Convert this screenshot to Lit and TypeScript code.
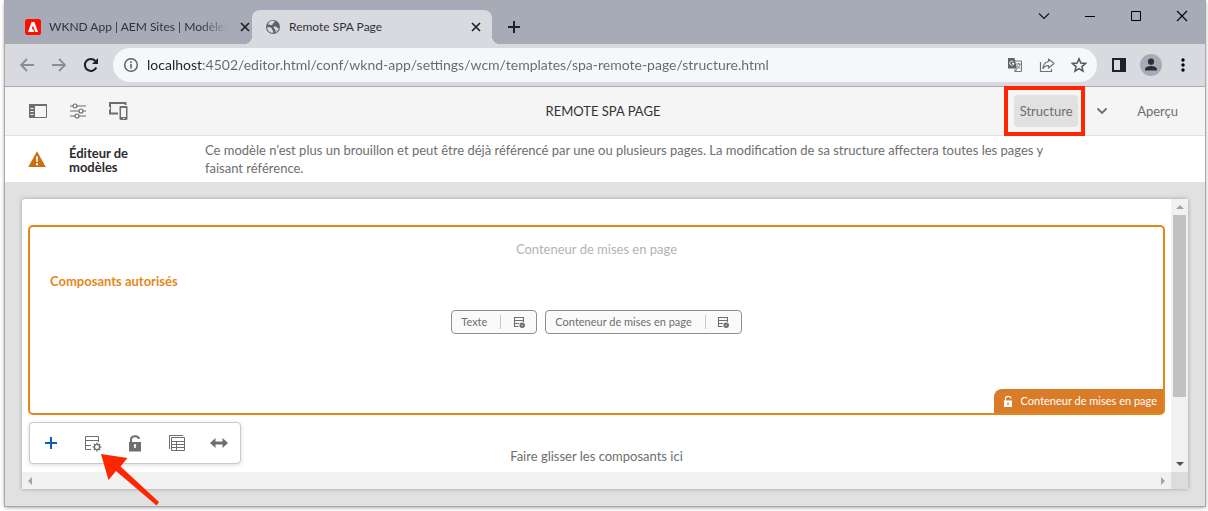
import { LitElement, html, css, svg, nothing } from "lit";
import { customElement, property } from "lit/decorators.js";

const GEAR_TEETH = [0, 45, 90, 135, 180, 225, 270, 315];

const icons: Record<string, unknown> = {
  adobe: svg`<rect width="16" height="16" rx="2.500" fill="#fa0f00"/><path d="M3 13 6.600 3h2.800L13 13h-2.600L8 6.600 6.600 10.200h1.700l1 2.800z" fill="#fff"/>`,
  globe: svg`<circle cx="8" cy="8" r="7" fill="#5f6368"/><path d="M3 5.600c1.500-.2 2.200.6 3.600.5 1.300-.1.700-1.600 2-2.100 1-.4 1.100-1 .6-2C6 1.200 3.600 2.800 3 5.600zM2.200 8.200c1.800 0 3.300-.4 4.300.8.8 1 .1 1.700 1.200 2.200.9.4.5 1.500 0 2.700-3-.1-5.500-2.300-5.500-5.700zM9 7.600c1.400-.3 2.600-.2 3 .8.3.9 1 .8 1.800.6-.3 2-1.800 4-3.600 4.500.4-1.600.8-2.300-.2-3.100-1-.7-1.900-2.500-1-2.800z" fill="#d9dae0"/>`,
  close: svg`<path d="m4 4 8 8M12 4l-8 8" stroke="#202124" stroke-width="1.700" fill="none"/>`,
  add: svg`<path d="M8 2v12M2 8h12" stroke="#202124" stroke-width="2"/>`,
  chevronThin: svg`<path d="m3 5.500 5 5 5-5" stroke="#111" fill="none" stroke-width="1.100"/>`,
  minimize: svg`<path d="M3 8.500h10" stroke="#000"/>`,
  maximize: svg`<path d="M3.500 3.500h9v9h-9z" stroke="#000" fill="none"/>`,
  closeWindow: svg`<path d="m3 3 10 10M13 3 3 13" stroke="#000" stroke-width="1.100"/>`,
  back: svg`<path d="M15 8H2M8 2 2 8l6 6" stroke="#8b8d94" stroke-width="1.800" fill="none"/>`,
  forward: svg`<path d="M1 8h13M8 2l6 6-6 6" stroke="#8b8d94" stroke-width="1.800" fill="none"/>`,
  reload: svg`<path d="M13.300 10.500A6 6 0 1 1 12.400 4" stroke="#202124" stroke-width="2" fill="none"/><path d="M15 1v6H9z" fill="#202124"/>`,
  info: svg`<circle cx="8" cy="8" r="6.300" stroke="#5f6368" stroke-width="1.500" fill="none"/><path d="M8 7v4.500M8 4.300V6" stroke="#5f6368" stroke-width="1.600"/>`,
  translate: svg`<path d="M7 4h7.500v10.500H7.500" fill="none" stroke="#777b80"/><path d="M1 1h6.500l2.500 10.500H1z" fill="#5f6368"/><path d="M7 6.200A2.100 2.100 0 1 1 6.400 4.700M5 6.300h2" fill="none" stroke="#fff"/><path d="M9 7h5M11.500 6v1m1.500 0c0 2-2 4-3 4.500M10.500 8.500c.5 1.500 2 2.500 3 3M8 12v2.500l2-2.500" stroke="#777b80" fill="none"/>`,
  share: svg`<path d="M1.500 5v9.500h11V12" fill="none" stroke="#6f7277" stroke-width="1.200"/><path d="M9.500 2 15 6.500 9.500 11V8.500C7 8.500 5.500 9.300 4 11.500c.3-4 2.500-6.500 5.500-7z" fill="none" stroke="#6f7277" stroke-width="1.200" stroke-linejoin="round"/>`,
  star: svg`<path d="m8 1.800 1.800 4.300 4.700.4-3.600 3.100 1.100 4.600-4-2.500-4 2.500 1.100-4.600L1.500 6.500l4.700-.4z" fill="none" stroke="#54575c" stroke-width="1.500"/>`,
  sidePanel: svg`<path d="M1 1h14v14H1zM3 3v10h6V3z" fill="#202124" fill-rule="evenodd"/>`,
  account: svg`<circle cx="12" cy="12" r="11" fill="#a7abb7"/><circle cx="12" cy="8.700" r="3.100" fill="#2b2e35"/><path d="M6 17.500v-1.300c0-2.200 3.500-3.200 6-3.200s6 1 6 3.200v1.300z" fill="#2b2e35"/>`,
  more: svg`<circle cx="8" cy="3" r="1.700"/><circle cx="8" cy="8" r="1.700"/><circle cx="8" cy="13" r="1.700"/>`,
  rail: svg`<path d="M.5 2.500h17v13H.5z" fill="none" stroke="#6e6e6e"/><path d="M0 2h18v2H0zM0 2h6v14H0z" fill="#6e6e6e"/><path d="M1.500 6.500h3M1.500 9.500h3M1.500 12.500h3" stroke="#f5f5f5"/>`,
  sliders: svg`<path d="M1 4h3M8 4h9M1 9h9M14 9h3M1 14h5M10 14h7" stroke="#6e6e6e" stroke-width="1.200"/><g fill="none" stroke="#6e6e6e" stroke-width="1.200"><circle cx="6" cy="4" r="2"/><circle cx="12" cy="9" r="2"/><circle cx="8" cy="14" r="2"/></g>`,
  devices: svg`<path d="M17.500 4V2H2v10.500h8" fill="none" stroke="#6e6e6e" stroke-width="2"/><path d="M1.500 6v2.500" stroke="#f5f5f5"/><rect x="11.500" y="5" width="8" height="14" rx="1.200" fill="#6e6e6e"/><path d="M13 7h5v9h-5z" fill="#f5f5f5"/><path d="M15 17.500h1.500" stroke="#f5f5f5"/>`,
  chevron: svg`<path d="m4 6 4 4 4-4" fill="none" stroke="#707070" stroke-width="1.900" stroke-linecap="round"/>`,
  alert: svg`<path d="M9 1.200 17.800 17H.2z" fill="#cb6f10"/><path d="M8 6.500h2L9.700 12H8.300zM8 13.300h2v2H8z" fill="#fff"/>`,
  policy: svg`<path d="M7 15.500H1.500v-13h13V8M1.500 6.500h13M1.500 11.500H7" fill="none" stroke="#6e6e6e"/><circle cx="13" cy="13" r="2.600" fill="none" stroke="#6e6e6e" stroke-width="1.300"/>${GEAR_TEETH.map(
    (a) => svg`<path d="M13 8.600v2" stroke="#6e6e6e" stroke-width="1.300" transform="rotate(${a} 13 13)"/>`
  )}`,
  policySmall: svg`<path d="M5.500 10.500H1.500v-9h9V6M1.500 4.500h9M1.500 7.500H6" fill="none" stroke="#6e6e6e" stroke-width="1.100"/><circle cx="9.200" cy="9.200" r="1.700" fill="none" stroke="#6e6e6e" stroke-width="2.100"/>`,
  plus: svg`<path d="M9 3v12M3 9h12" stroke="#0d5cb8" stroke-width="2"/>`,
  unlock: svg`<path d="M5 9V5.500C5 1.500 12.500.8 13 5" fill="none" stroke="#6e6e6e" stroke-width="2"/><path d="M3 8h12v9.500H3zM8.200 14h1.600v-1.700a1.300 1.300 0 1 0-1.600 0z" fill="#6e6e6e" fill-rule="evenodd"/>`,
  unlockWhite: svg`<path d="M2.500 6V3.500C2.500.8 8 .5 8 3.500" fill="none" stroke="#fff" stroke-width="1.200"/><path d="M1 5.500h8V12H1zM4.300 7.500V10h1.400V7.500z" fill="#fff" fill-rule="evenodd"/>`,
  table: svg`<path d="M1.500 15V1.500H15M3.500 3.500h13v13h-13zM3.500 7.500h13M3.500 10.500h13M3.500 13.500h13M8.500 7v9.500" fill="none" stroke="#6e6e6e"/>`,
  arrows: svg`<path d="m0 9 5.500-5v3.500h7V4L18 9l-5.500 5v-3.500h-7V14z" fill="#6e6e6e"/>`,
  up: svg`<path d="m4 10 4-4 4 4z" fill="#a3a3a3"/>`,
  down: svg`<path d="m4 6 4 4 4-4z" fill="#505050"/>`,
  left: svg`<path d="m10 4-4 4 4 4z" fill="#a3a3a3"/>`,
  right: svg`<path d="m6 4 4 4-4 4z" fill="#a3a3a3"/>`,
};

@customElement("ui-icon")
class UiIcon extends LitElement {
  @property() name = "";
  @property({ type: Number }) size = 16;

  static styles = css`
    :host { display: inline-flex; flex: none; }
    svg { display: block; }
  `;

  render() {
    return html`<svg width=${this.size} height=${this.size} viewBox="0 0 ${this.size} ${this.size}" aria-hidden="true">${icons[this.name] ?? nothing}</svg>`;
  }
}

const buttonReset = css`
  *, *::before { box-sizing: border-box; }
  button {
    display: inline-flex;
    align-items: center;
    justify-content: center;
    padding: 0;
    border: 0;
    background: none;
    font: inherit;
    color: inherit;
    cursor: pointer;
  }
`;

const iconButton = (name: string, label: string, size = 16, cls = "") =>
  html`<button class=${cls} aria-label=${label}><ui-icon name=${name} size=${size}></ui-icon></button>`;

@customElement("browser-chrome")
class BrowserChrome extends LitElement {
  static styles = [
    buttonReset,
    css`
      :host { display: block; font: 12px/16px Lato, sans-serif; color: #3c4043; }
      .strip { display: flex; height: 43px; padding: 9px 7px 0; background: #a7abb7; }
      .tabs { display: flex; flex: 1; min-width: 0; }
      .tab {
        display: flex;
        align-items: center;
        gap: 8px;
        width: 240px;
        padding: 0 8px 0 13px;
        border-radius: 8px 8px 0 0;
        color: #303238;
      }
      .active { position: relative; background: #d9dae0; }
      .active::before, .active::after {
        content: "";
        position: absolute;
        bottom: 0;
        width: 8px;
        height: 8px;
      }
      .active::before { left: -8px; background: radial-gradient(circle at 0 0, transparent 8px, #d9dae0 8px); }
      .active::after { right: -8px; background: radial-gradient(circle at 100% 0, transparent 8px, #d9dae0 8px); }
      .name { flex: 1; white-space: nowrap; }
      .faded { mask-image: linear-gradient(to right, #000 84%, transparent 100%); }
      .new { width: 28px; margin-left: 8px; }
      .controls { display: flex; align-items: flex-start; padding-right: 8px; gap: 30px; }
      .controls button { margin-top: -2px; }
      .bar { display: flex; align-items: center; height: 43px; padding: 0 14px; background: #d9dae0; border-bottom: 1px solid #acadb2; }
      .nav { display: flex; gap: 16px; padding-right: 14px; }
      .address {
        display: flex;
        flex: 1;
        align-items: center;
        gap: 16px;
        height: 34px;
        padding: 0 10px;
        border-radius: 17px;
        background: #f6f7f9;
      }
      .address .site { margin-right: -8px; }
      .address input {
        flex: 1;
        min-width: 0;
        padding: 0;
        border: 0;
        outline: 0;
        font: 14px/20px Lato, sans-serif;
        color: transparent;
        caret-color: #202124;
        background: linear-gradient(to right, #202124 56px, #64676c 56px);
        background-clip: text;
        -webkit-background-clip: text;
      }
      .tools { display: flex; align-items: center; gap: 12px; padding-left: 14px; }
    `,
  ];

  render() {
    return html`
      <div class="strip">
        <div class="tabs">
          <div class="tab">
            <ui-icon name="adobe"></ui-icon><span class="name faded">WKND App | AEM Sites | Modèles</span>
            ${iconButton("close", "Fermer l’onglet")}
          </div>
          <div class="tab active">
            <ui-icon name="globe"></ui-icon><span class="name">Remote SPA Page</span>
            ${iconButton("close", "Fermer l’onglet")}
          </div>
          ${iconButton("add", "Nouvel onglet", 16, "new")}
        </div>
        <div class="controls">
          ${iconButton("chevronThin", "Rechercher dans les onglets")}
          ${iconButton("minimize", "Réduire")}
          ${iconButton("maximize", "Agrandir")}
          ${iconButton("closeWindow", "Fermer")}
        </div>
      </div>
      <div class="bar">
        <div class="nav">
          ${iconButton("back", "Précédent")} ${iconButton("forward", "Suivant")} ${iconButton("reload", "Actualiser")}
        </div>
        <div class="address">
          ${iconButton("info", "Informations sur le site", 16, "site")}
          <input aria-label="Adresse" value="localhost:4502/editor.html/conf/wknd-app/settings/wcm/templates/spa-remote-page/structure.html" />
          ${iconButton("translate", "Traduire")} ${iconButton("share", "Partager")} ${iconButton("star", "Ajouter aux favoris")}
        </div>
        <div class="tools">
          ${iconButton("sidePanel", "Panneau latéral")} ${iconButton("account", "Profil", 24)} ${iconButton("more", "Menu")}
        </div>
      </div>
    `;
  }
}

@customElement("template-canvas")
class TemplateCanvas extends LitElement {
  static styles = [
    buttonReset,
    css`
      :host {
        display: grid;
        grid-template-columns: 1fr 17px;
        grid-template-rows: 1fr 17px;
        border-radius: 3px 3px 0 0;
        background: #fff;
        box-shadow: 0 0 4px rgb(0 0 0 / 30%);
      }
      .page { position: relative; padding: 26px 6px 0; }
      .container {
        display: flex;
        flex-direction: column;
        align-items: center;
        min-height: 190px;
        padding-top: 12px;
        border: 2px solid #e68619;
        border-radius: 5px;
      }
      .title { color: #b3b3b3; line-height: 20px; }
      h2 { align-self: flex-start; margin: 12px 20px 19px; font-size: 13px; line-height: 20px; color: #e68619; }
      .chips { display: flex; gap: 8px; }
      .chip {
        display: flex;
        align-items: center;
        height: 24px;
        padding-left: 9px;
        border: 1px solid #8e8e8e;
        border-radius: 4px;
        background: #fafafa;
        font-size: 11px;
        line-height: 14px;
        color: #6e6e6e;
      }
      .chip button { width: 36px; height: 14px; margin-left: 13px; border-left: 1px solid #cacaca; }
      .tag {
        display: flex;
        align-items: center;
        gap: 6px;
        align-self: flex-end;
        height: 24px;
        margin-top: auto;
        padding: 0 6px 0 9px;
        border-radius: 8px 0 0 0;
        background: #da7b27;
        color: #fff;
        font-size: 11px;
      }
      .drop { margin: 31px 0 0; line-height: 20px; text-align: center; color: #6e6e6e; }
      .actions {
        position: absolute;
        left: 7px;
        bottom: 8px;
        display: flex;
        height: 42px;
        border: 1px solid #cacaca;
        border-radius: 4px;
        background: #fff;
        box-shadow: 0 1px 4px rgb(0 0 0 / 15%);
      }
      .actions button { width: 42px; }
      .track { display: flex; align-items: center; background: #f1f1f1; }
      .vertical { flex-direction: column; }
      .thumb { width: 13px; height: 182px; background: #c1c1c1; }
      .end { margin-left: auto; }
      .bottom { margin-top: auto; }
      .corner { background: #dcdcdc; }
    `,
  ];

  private chip(label: string) {
    return html`<div class="chip"><span>${label}</span>${iconButton("policySmall", `Stratégie : ${label}`, 12)}</div>`;
  }

  render() {
    return html`
      <div class="page">
        <section class="container">
          <div class="title">Conteneur de mises en page</div>
          <h2>Composants autorisés</h2>
          <div class="chips">${this.chip("Texte")} ${this.chip("Conteneur de mises en page")}</div>
          <div class="tag"><ui-icon name="unlockWhite" size="12"></ui-icon>Conteneur de mises en page</div>
        </section>
        <p class="drop">Faire glisser les composants ici</p>
        <div class="actions" role="toolbar">
          ${iconButton("plus", "Insérer un composant", 18)} ${iconButton("policy", "Stratégie", 18)}
          ${iconButton("unlock", "Déverrouiller", 18)} ${iconButton("table", "Parent", 18)}
          ${iconButton("arrows", "Disposition", 18)}
        </div>
      </div>
      <div class="track vertical">
        <ui-icon name="up"></ui-icon>
        <div class="thumb"></div>
        <ui-icon class="bottom" name="down"></ui-icon>
      </div>
      <div class="track"><ui-icon name="left"></ui-icon><ui-icon class="end" name="right"></ui-icon></div>
      <div class="corner"></div>
    `;
  }
}

@customElement("app-root")
class AppRoot extends LitElement {
  static styles = [
    buttonReset,
    css`
      :host {
        display: flex;
        box-sizing: border-box;
        min-height: 100vh;
        padding: 1px 3px 5px 5px;
        background: #fff;
        font: 13px/18px Lato, sans-serif;
        color: #6e6e6e;
      }
      .window {
        position: relative;
        display: flex;
        flex: 1;
        flex-direction: column;
        min-width: 0;
        background: #e1e1e1;
        box-shadow: 0 0 0 1px #a9a9a9, 0 1px 4px rgb(0 0 0 / 50%);
      }
      .header {
        display: grid;
        grid-template-columns: 1fr auto 1fr;
        align-items: center;
        height: 49px;
        padding: 0 27px 0 23px;
        border-bottom: 1px solid #e1e1e1;
        background: #f5f5f5;
      }
      .left { display: flex; gap: 20px; }
      .left button { width: 20px; }
      h1 { margin: 0; font-size: 13px; font-weight: 400; color: #323232; }
      .right { display: flex; justify-content: flex-end; align-items: center; }
      .mode { position: relative; width: 64px; height: 32px; border-radius: 4px; background: #e1e1e1; }
      .highlight { position: absolute; inset: -9px -7px -9px -10px; border: 4px solid #fe2600; }
      .menu { width: 48px; }
      .preview { margin-left: 11px; }
      .banner {
        display: grid;
        grid-template-columns: 18px 100px minmax(0, 900px);
        align-items: start;
        padding: 5px 23px;
        background: #fff;
      }
      .banner ui-icon { margin-top: 9px; }
      .banner h2 { margin: 5px 0 0 23px; font-size: 13px; line-height: 14px; color: #2c2c2c; }
      .banner p { margin: 0 0 0 59px; }
      .canvas { flex: 1; margin: 17px; }
      .pointer { position: absolute; left: 95px; top: 452px; }
    `,
  ];

  render() {
    return html`
      <div class="window">
        <browser-chrome></browser-chrome>
        <header class="header">
          <div class="left">
            ${iconButton("rail", "Panneau latéral", 18)} ${iconButton("sliders", "Informations sur la page", 18)}
            ${iconButton("devices", "Émulateur", 20)}
          </div>
          <h1>REMOTE SPA PAGE</h1>
          <div class="right">
            <button class="mode">Structure<span class="highlight"></span></button>
            ${iconButton("chevron", "Choisir un mode", 16, "menu")}
            <button class="preview">Aperçu</button>
          </div>
        </header>
        <section class="banner">
          <ui-icon name="alert" size="18"></ui-icon>
          <h2>Éditeur de modèles</h2>
          <p>Ce modèle n’est plus un brouillon et peut être déjà référencé par une ou plusieurs pages. La modification de sa structure affectera toutes les pages y faisant référence.</p>
        </section>
        <template-canvas class="canvas"></template-canvas>
        <svg class="pointer" width="60" height="54" viewBox="0 0 60 54" aria-hidden="true">
          <path d="M1 1 27.500 5 20.500 13.500 59 49 56.500 52.500 16 18 8.500 27z" fill="#fe2600" />
        </svg>
      </div>
    `;
  }
}
